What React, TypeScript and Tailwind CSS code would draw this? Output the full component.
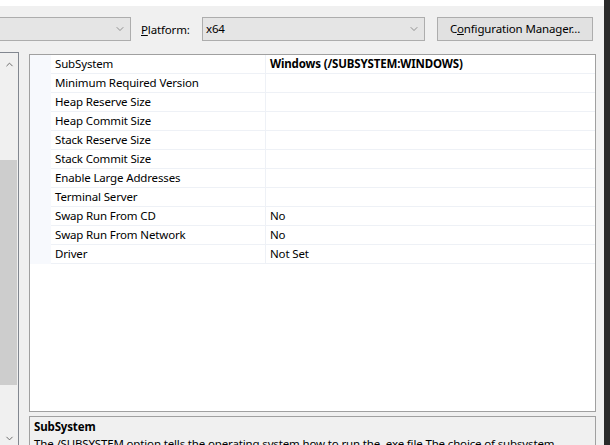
import { ChevronDown, ChevronUp } from 'lucide-react';

const rows: { name: string; value?: string; bold?: boolean }[] = [
  { name: 'SubSystem', value: 'Windows (/SUBSYSTEM:WINDOWS)', bold: true },
  { name: 'Minimum Required Version' },
  { name: 'Heap Reserve Size' },
  { name: 'Heap Commit Size' },
  { name: 'Stack Reserve Size' },
  { name: 'Stack Commit Size' },
  { name: 'Enable Large Addresses' },
  { name: 'Terminal Server' },
  { name: 'Swap Run From CD', value: 'No' },
  { name: 'Swap Run From Network', value: 'No' },
  { name: 'Driver', value: 'Not Set' },
];

function Combo({ className, children }: { className: string; children?: React.ReactNode }) {
  return (
    <div className={`h-[24px] flex items-center border border-[#adadad] bg-[#e5e5e5] ${className}`}>
      <span className="flex-1 pl-[3px] truncate">{children}</span>
      <ChevronDown size={12} strokeWidth={1.2} className="mr-[4px] text-[#555]" />
    </div>
  );
}

export default function App() {
  return (
    <div
      className="w-[610px] h-[445px] overflow-hidden flex bg-white text-[11.5px] tracking-[-0.15px] text-black"
      style={{ fontFamily: '"Noto Sans", "Open Sans", sans-serif' }}
    >
      <div className="flex-1 flex flex-col mt-[6px] bg-[#f0f0f0] min-h-0">
        <div className="h-[46px] shrink-0 flex items-start pt-[11px]">
          <Combo className="w-[132px] -ml-px" />
          <span className="ml-[10px] mt-[4px] w-[61px]">
            <span className="underline">P</span>latform:
          </span>
          <Combo className="w-[223px]">x64</Combo>
          <button className="ml-[12px] h-[24px] w-[156px] border border-[#adadad] bg-[#e1e1e1]">
            C<span className="underline">o</span>nfiguration Manager...
          </button>
        </div>

        <div className="flex-1 flex min-h-0">
          <div className="w-[19px] border-t border-r border-[#828790] flex flex-col">
            <div className="h-[18px] flex items-center justify-center pt-[4px]">
              <ChevronUp size={11} strokeWidth={2} className="text-[#606060]" />
            </div>
            <div className="h-[89px]" />
            <div className="h-[225px] w-[17px] bg-[#cdcdcd]" />
            <div className="flex-1" />
            <div className="h-[12px] flex justify-center">
              <ChevronDown size={11} strokeWidth={2} className="text-[#606060]" />
            </div>
          </div>

          <div className="w-[567px] ml-[10px] mt-[2px] flex flex-col">
            <div className="h-[358px] shrink-0 border border-[#a0a0a0] bg-white flex flex-col">
              {rows.map((r) => (
                <div key={r.name} className="h-[19px] flex">
                  <div className="w-[21px] bg-[#f7f9fd]" />
                  <div className="w-[214px] pl-[4px] leading-[18px] border-b border-[#eef1f6]">{r.name}</div>
                  <div className={`flex-1 pl-[4px] leading-[18px] border-b border-l border-[#eef1f6] ${r.bold ? 'font-bold' : ''}`}>
                    {r.value}
                  </div>
                </div>
              ))}
            </div>
            <div className="mt-[4px] flex-1 border border-[#a0a0a0] bg-[#f0f0f0] px-[4px] pt-[1px] leading-[17px]">
              <div className="font-bold">SubSystem</div>
              <div className="whitespace-nowrap">
                The /SUBSYSTEM option tells the operating system how to run the .exe file The choice of subsystem
              </div>
            </div>
          </div>
          <div className="flex-1" />
        </div>
      </div>
      <div className="w-[6px] bg-[#2b2b2b]" />
    </div>
  );
}
